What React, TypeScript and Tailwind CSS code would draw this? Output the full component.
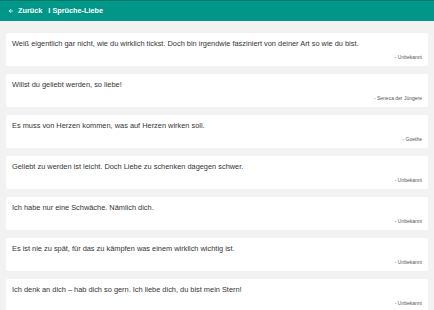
import { ArrowLeft } from 'lucide-react';

const QUOTES = [
  { text: 'Weiß eigentlich gar nicht, wie du wirklich tickst. Doch bin irgendwie fasziniert von deiner Art so wie du bist.', author: 'Unbekannt' },
  { text: 'Willst du geliebt werden, so liebe!', author: 'Seneca der Jüngere' },
  { text: 'Es muss von Herzen kommen, was auf Herzen wirken soll.', author: 'Goethe' },
  { text: 'Geliebt zu werden ist leicht. Doch Liebe zu schenken dagegen schwer.', author: 'Unbekannt' },
  { text: 'Ich habe nur eine Schwäche. Nämlich dich.', author: 'Unbekannt' },
  { text: 'Es ist nie zu spät, für das zu kämpfen was einem wirklich wichtig ist.', author: 'Unbekannt' },
  { text: 'Ich denk an dich – hab dich so gern. Ich liebe dich, du bist mein Stern!', author: 'Unbekannt' },
];

export default function App() {
  return (
    <div className="h-[310px] overflow-hidden bg-[#f2f2f2] font-['Liberation_Sans',Arial,sans-serif]">
      {/* Header */}
      <div className="h-[21px] bg-[#009688] border-t border-[#00796b] flex items-center px-[8px] text-white font-bold text-[7.3px]">
        <ArrowLeft className="w-[6px] h-[6px]" strokeWidth={3} />
        <span className="ml-[4px]">Zurück</span>
        <span className="ml-[6px]">I Sprüche-Liebe</span>
      </div>

      {/* Quote list */}
      <div className="flex flex-col gap-[8px] px-[6px] pt-[12px]">
        {QUOTES.map((q, i) => (
          <div key={i} className="bg-white rounded-[2px] px-[6px] pt-[7px] pb-[6px]">
            <p className="text-[7.4px] leading-[8px] text-[#333] whitespace-nowrap">{q.text}</p>
            <p className="mt-[6px] text-[5px] leading-[6px] text-[#555] text-right">- {q.author}</p>
          </div>
        ))}
      </div>
    </div>
  );
}
